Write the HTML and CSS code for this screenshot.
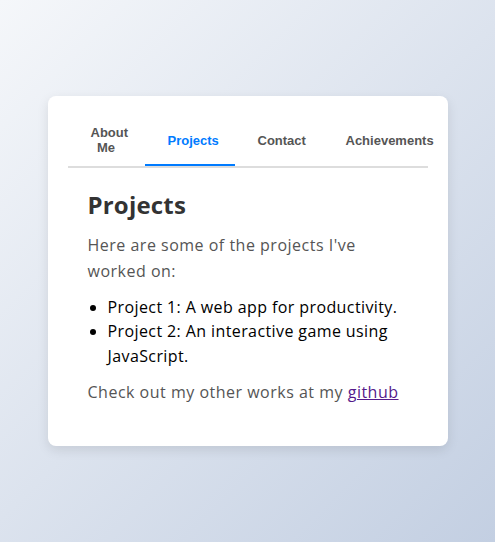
FILE: index.html
```html
<!DOCTYPE html>
<html>
<head>
<meta charset="utf-8">
<link rel="stylesheet" href="styles.css">
</head>
<body>
<div class="card">
  <nav class="tabs">
    <button class="tab tab-about">About Me</button>
    <button class="tab tab-projects active">Projects</button>
    <button class="tab tab-contact">Contact</button>
    <button class="tab tab-achievements">Achievements</button>
  </nav>
  <section class="content">
    <h2 class="title">Projects</h2>
    <p class="text">Here are some of the projects I've worked on:</p>
    <ul class="list">
      <li>Project 1: A web app for productivity.</li>
      <li>Project 2: An interactive game using JavaScript.</li>
    </ul>
    <p class="text last">Check out my other works at my <a class="link" href="#">github</a></p>
  </section>
</div>
</body>
</html>
```
FILE: styles.css
```css
html, body {
  margin: 0;
  height: 100%;
}
body {
  background: linear-gradient(135deg, #f5f7fa 0%, #c3cfe2 100%);
  display: flex;
  align-items: center;
  justify-content: center;
  font-family: "Open Sans", sans-serif;
}
.card {
  width: 400px;
  box-sizing: border-box;
  background: #fff;
  border-radius: 8px;
  padding: 20px;
  box-shadow: 0 4px 12px rgba(0, 0, 0, 0.1);
}
.tabs {
  display: flex;
  border-bottom: 2px solid #ddd;
}
.tab {
  flex: none;
  min-width: 0;
  box-sizing: border-box;
  background: none;
  border: none;
  border-bottom: 2px solid transparent;
  padding: 9px 23px;
  font-family: "Liberation Sans", Arial, sans-serif;
  font-weight: bold;
  font-size: 13px;
  color: #555;
  cursor: pointer;
}
.tab-about { width: 77px; }
.tab-projects { width: 90px; }
.tab-contact { width: 88px; }
.tab-achievements { width: 105px; }
.tab.active {
  color: #007bff;
  border-bottom-color: #007bff;
}
.content {
  padding: 20px;
}
.title {
  margin: 0 0 12px;
  font-size: 24px;
  font-weight: 700;
  color: #333;
  letter-spacing: 0.2px;
}
.text {
  margin: 0 0 10px;
  font-size: 16px;
  line-height: 1.6;
  color: #555;
  letter-spacing: 0.5px;
}
.text.last {
  margin-bottom: 0;
}
.list {
  margin: 0 0 11px;
  padding-left: 20px;
  font-size: 16px;
  line-height: 1.55;
  color: #000;
  letter-spacing: 0.4px;
}
.link {
  color: #551a8b;
}
```
